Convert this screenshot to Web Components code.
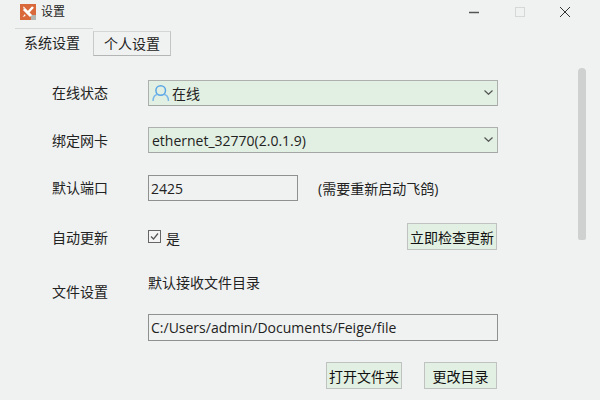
<!DOCTYPE html>
<html>
<head>
<meta charset="utf-8">
<title>设置</title>
<style>
    html, body { margin: 0; height: 100%; }
    body {
        width: 600px;
        height: 400px;
        overflow: hidden;
        background: #f0f2f1;
        color: #222;
        font: 14px "Open Sans", "Noto Sans CJK SC", sans-serif;
        display: flex;
        flex-direction: column;
    }
</style>
</head>
<body>
<title-bar>设置</title-bar>
<tab-bar></tab-bar>
<settings-page></settings-page>

<script>
class TitleBar extends HTMLElement {
    constructor() {
        super();
        this.attachShadow({ mode: 'open' });
        this.shadowRoot.innerHTML = `
        <style>
          :host { display: flex; align-items: center; height: 28px; flex: none; padding-left: 20px; }
          .logo { width: 16px; height: 16px; margin-top: -4px; }
          .name { margin-left: 5px; margin-top: -4px; line-height: 20px; font-size: 12px; }
          .ctl { margin-left: auto; display: flex; margin-top: -4px; }
          .ctl svg { width: 10px; height: 10px; display: block; }
        </style>
        <svg class="logo" viewBox="0 0 16 16">
          <rect width="16" height="16" fill="#d9683a"/>
          <path d="M11 11h5v5h-5z" fill="#b5b5b0"/>
          <path d="M4 5l7 7" stroke="#fff" stroke-width="3"/>
          <path d="M13 3L7 9.500" stroke="#fff" stroke-width="2.500"/>
          <path d="M3 2.500l2 1-1 2zM5 10l-2.500 3 3-1z" fill="#fff"/>
        </svg>
        <span class="name"><slot></slot></span>
        <div class="ctl">
          <svg viewBox="0 0 10 10" style="margin-right:36px"><path d="M0 5.500h10" stroke="#555" stroke-width="1.500"/></svg>
          <svg viewBox="0 0 10 10" style="margin-right:35px"><rect x=".5" y=".5" width="9" height="9" fill="none" stroke="#d5d8d6"/></svg>
          <svg viewBox="0 0 10 10" style="margin-right:30px"><path d="M0 0l10 10M10 0L0 10" stroke="#333" stroke-width="1"/></svg>
        </div>
        `
    }
}

class TabBar extends HTMLElement {
    constructor() {
        super();
        this.attachShadow({ mode: 'open' });
        this.shadowRoot.innerHTML = `
        <style>
          :host { display: flex; align-items: flex-end; height: 28px; flex: none; padding-left: 15px; }
          .tab { width: 78px; box-sizing: border-box; text-align: center; line-height: 20px; }
          .on { height: 28px; padding: 4px 4px 0 0; border-top: 1px solid #d8d8d8; }
          .off { height: 25px; padding-top: 2px; border: 1px solid #d4d6d5; border-left-color: #c8cac9; border-bottom: 1px solid #b4b6b5; border-right: 1px solid #c4c6c5; }
        </style>
        <div class="tab on">系统设置</div>
        <div class="tab off">个人设置</div>
        `
    }
}

class ComboBox extends HTMLElement {
    constructor() {
        super();
        this.attachShadow({ mode: 'open' });
        this.shadowRoot.innerHTML = `
        <style>
          :host { display: flex; align-items: center; box-sizing: border-box; height: 26px; width: 350px; padding: 0 4px 0 3px; background: #e2f0e3; border: 1px solid #aeb0af; border-bottom-color: #a4a6a5; }
          .txt { flex: 1; display: flex; align-items: center; }
          svg { width: 9px; height: 5px; margin-top: -1px; }
        </style>
        <div class="txt"><slot></slot></div>
        <svg viewBox="0 0 9 5"><path d="M.5.500l4 3.800 4-3.800" fill="none" stroke="#555" stroke-width="1.200"/></svg>
        `
    }
}

class TextField extends HTMLElement {
    constructor() {
        super();
        this.attachShadow({ mode: 'open' });
        this.shadowRoot.innerHTML = `
        <style>
          :host { display: flex; align-items: center; box-sizing: border-box; height: 27px; padding-left: 2px; border: 1px solid #8f9190; background: #f0f2f1; }
        </style>
        <slot></slot>
        `
    }
}

class PushButton extends HTMLElement {
    constructor() {
        super();
        this.attachShadow({ mode: 'open' });
        this.shadowRoot.innerHTML = `
        <style>
          :host { display: flex; align-items: center; justify-content: center; box-sizing: border-box; height: 27px; background: #e2f0e3; border: 1px solid #c0c2c1; color: #111; }
        </style>
        <slot></slot>
        `
    }
}

class CheckBox extends HTMLElement {
    constructor() {
        super();
        this.attachShadow({ mode: 'open' });
        this.shadowRoot.innerHTML = `
        <style>
          :host { display: flex; align-items: center; gap: 5px; }
          svg { width: 13px; height: 13px; display: block; margin-top: -2px; }
        </style>
        <svg viewBox="0 0 13 13">
          <rect x=".5" y=".5" width="12" height="12" fill="#f4f5f4" stroke="#666"/>
          <path d="M3 6.500l2.500 2.500L10 3.500" fill="none" stroke="#555" stroke-width="1.200"/>
        </svg>
        <slot></slot>
        `
    }
}

class SettingsPage extends HTMLElement {
    constructor() {
        super();
        this.attachShadow({ mode: 'open' });
        this.shadowRoot.innerHTML = `
        <style>
          :host { display: flex; flex: 1; min-height: 0; }
          .form {
            width: 446px;
            margin-left: 52px;
            padding-top: 24px;
            display: grid;
            grid-template-columns: 96px 350px;
            grid-template-rows: 26px 27px 27px 27px 22px 27px 27px;
            row-gap: 21px;
            align-items: start;
            align-content: start;
          }
          .lab { line-height: 26px; }
          .two { display: flex; align-items: center; gap: 20px; }
          .two text-field { width: 150px; height: 26px; }
          .auto { display: flex; align-items: center; justify-content: space-between; padding-right: 1px; }
          .auto push-button { width: 90px; }
          .auto check-box { margin-top: 2px; }
          .file-label { margin-top: 8px; }
          .hint { line-height: 24px; }
          .btns { display: flex; justify-content: flex-end; gap: 22px; padding-right: 1px; }
          .open { width: 76px; }
          .change { width: 73px; }
          .rail { margin-left: 80px; padding-top: 12px; }
          .thumb { width: 8px; height: 172px; background: #cfd0d0; border-radius: 4px 4px 2px 2px; }
          svg { width: 18px; height: 20px; margin-right: 2px; flex: none; }
        </style>
        <div class="form">
          <div class="lab">在线状态</div>
          <combo-box>
            <svg viewBox="0 0 18 20"><circle cx="8.700" cy="7.500" r="4.800" fill="none" stroke="#5aa5e6" stroke-width="1.500"/><path d="M1 18c0-4.500 2.500-6.500 4.500-6.500M16.500 18c0-4.500-2.500-6.500-4.500-6.500" fill="none" stroke="#7ab8ea" stroke-width="1.500"/></svg>在线
          </combo-box>
          <div class="lab" style="margin-top:1px">绑定网卡</div>
          <combo-box>ethernet_32770(2.0.1.9)</combo-box>
          <div class="lab">默认端口</div>
          <div class="two"><text-field>2425</text-field><span>(需要重新启动飞鸽)</span></div>
          <div class="lab" style="margin-top:2px">自动更新</div>
          <div class="auto"><check-box>是</check-box><push-button>立即检查更新</push-button></div>
          <div class="lab file-label">文件设置</div>
          <div class="hint">默认接收文件目录</div>
          <div></div>
          <text-field>C:/Users/admin/Documents/Feige/file</text-field>
          <div></div>
          <div class="btns"><push-button class="open">打开文件夹</push-button><push-button class="change">更改目录</push-button></div>
        </div>
        <div class="rail"><div class="thumb"></div></div>
        `
    }
}

window.customElements.define('title-bar', TitleBar);
window.customElements.define('tab-bar', TabBar);
window.customElements.define('combo-box', ComboBox);
window.customElements.define('text-field', TextField);
window.customElements.define('push-button', PushButton);
window.customElements.define('check-box', CheckBox);
window.customElements.define('settings-page', SettingsPage);
</script>
</body>
</html>
